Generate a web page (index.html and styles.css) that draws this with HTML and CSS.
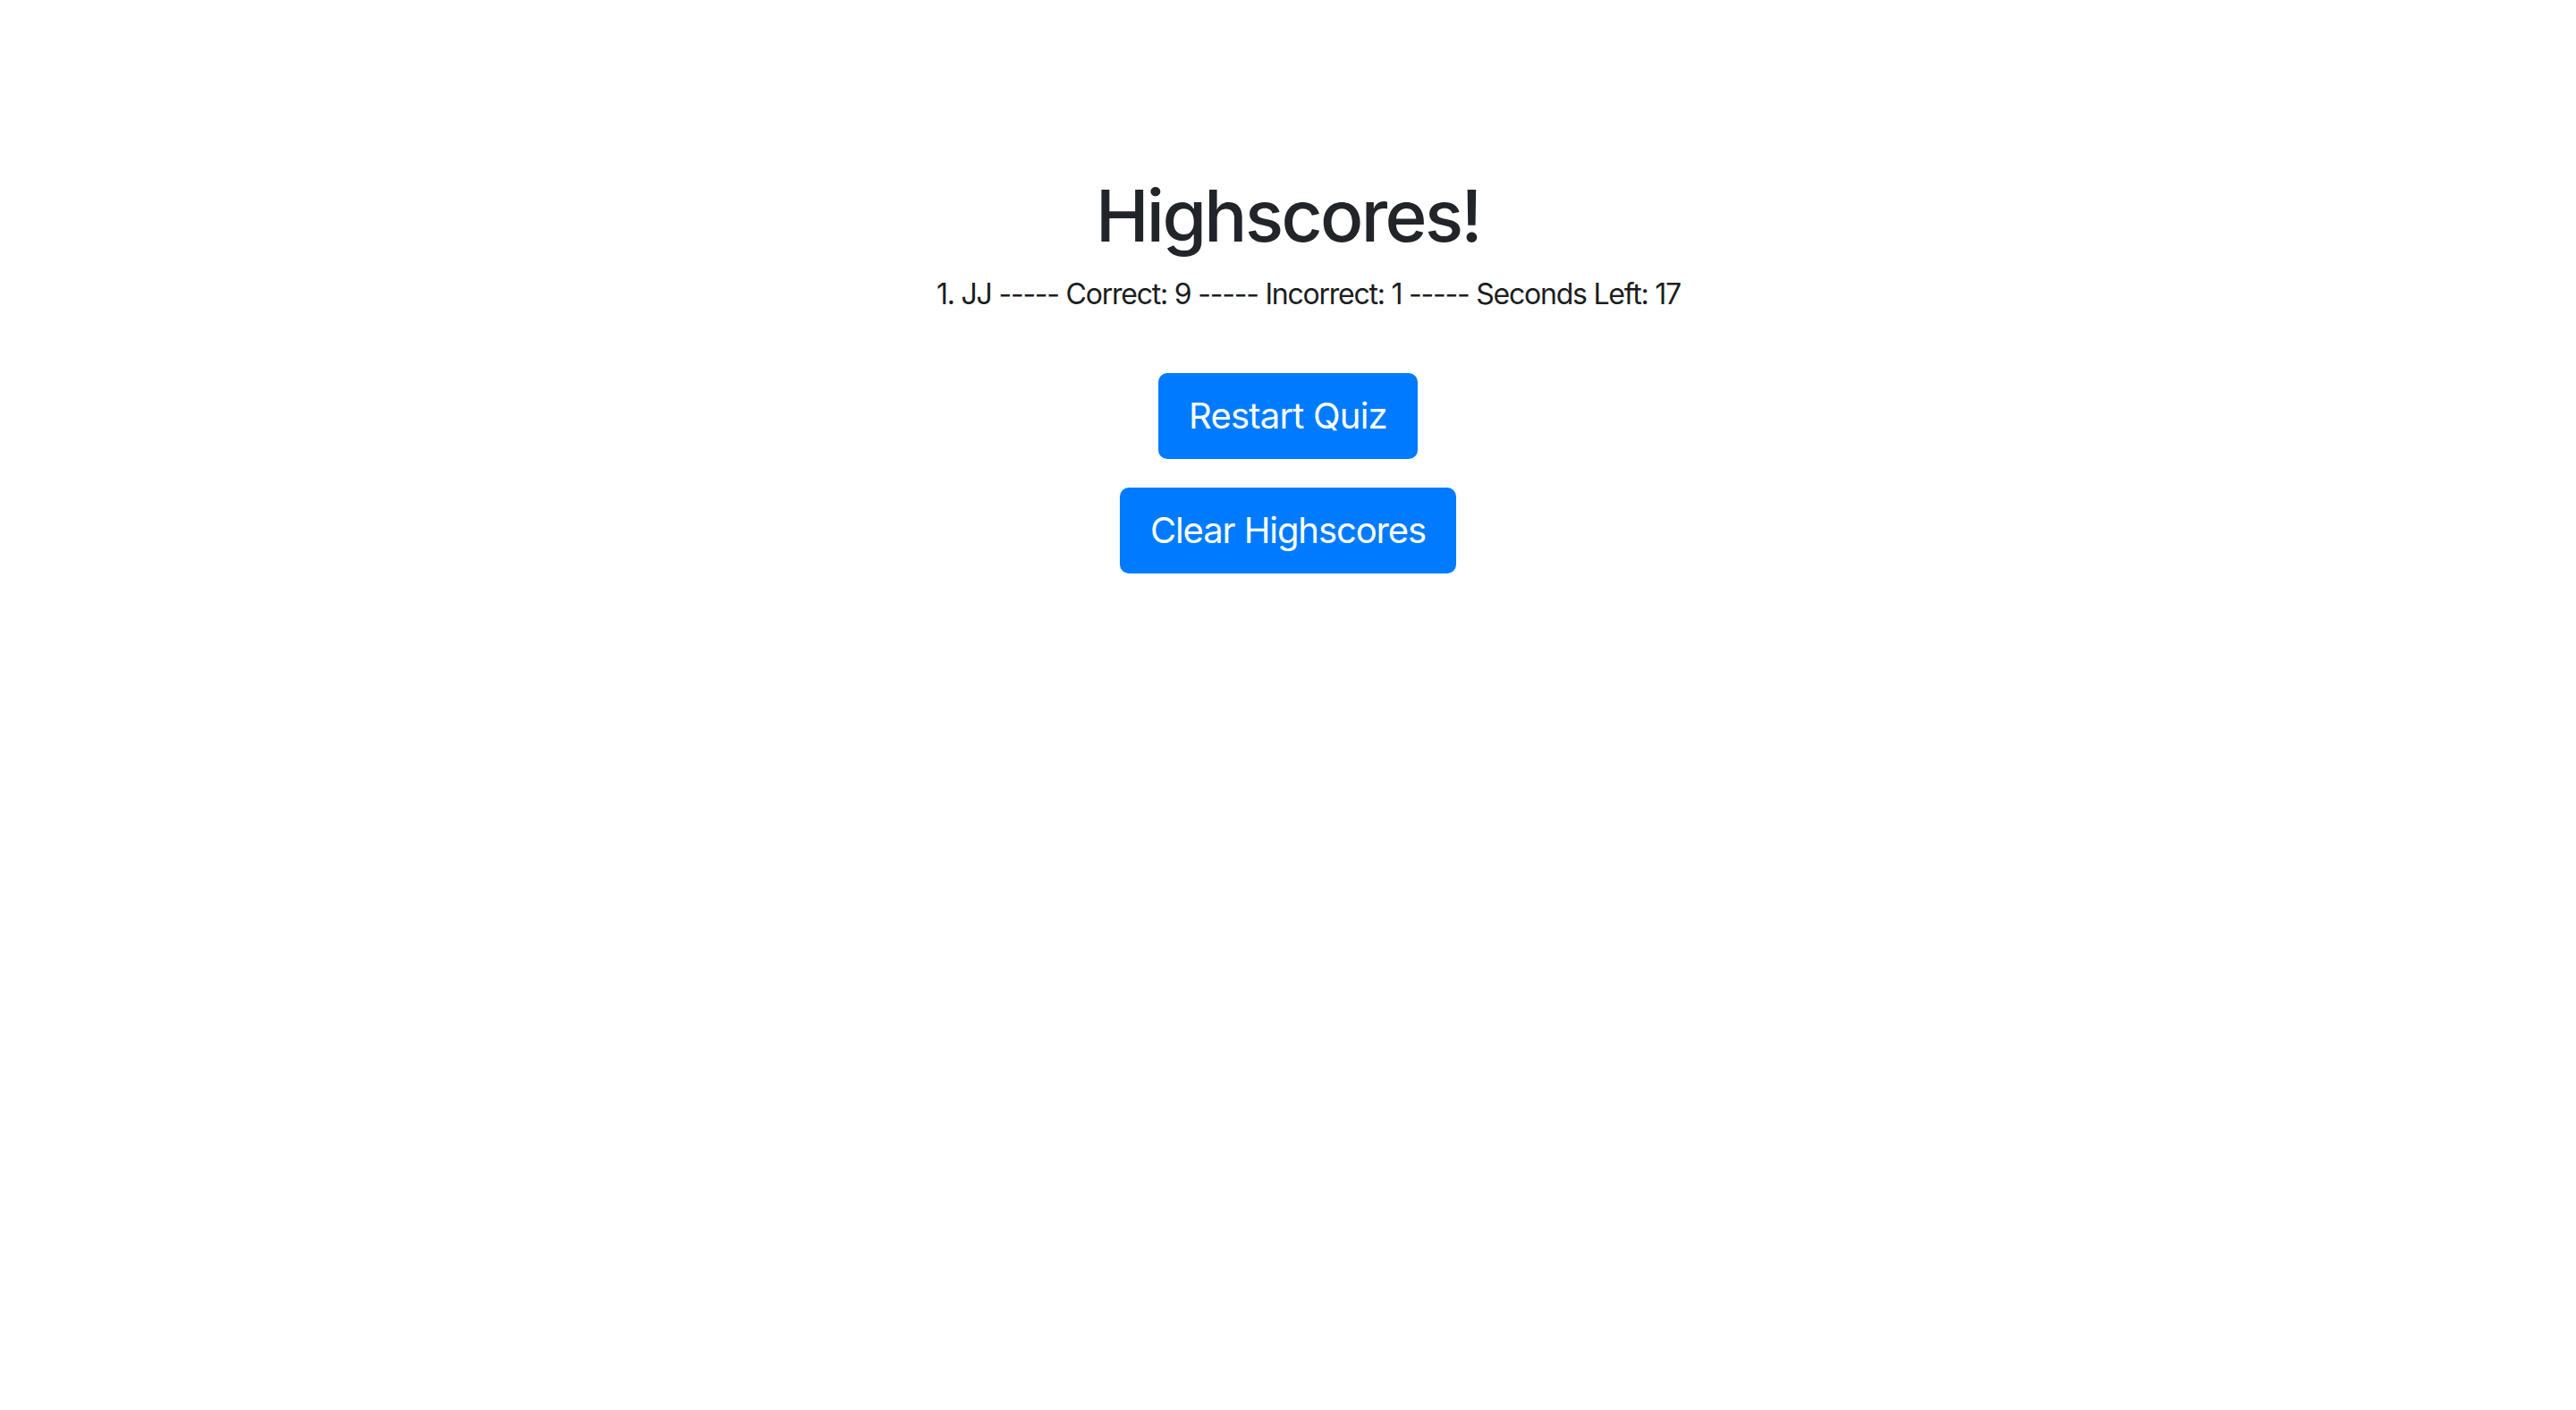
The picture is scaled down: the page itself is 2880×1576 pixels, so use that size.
FILE: index.html
```html
<!DOCTYPE html>
<html lang="en">
<head>
<meta charset="utf-8">
<title>Highscores</title>
<link rel="stylesheet" href="styles.css">
</head>
<body>
<main class="page">
  <h1 class="title">Highscores!</h1>
  <ol class="scores">
    <li class="score">1. JJ ----- Correct: 9 ----- Incorrect: 1 ----- Seconds Left: 17</li>
  </ol>
  <div class="actions">
    <button class="btn btn-restart" type="button">Restart Quiz</button>
    <button class="btn btn-clear" type="button">Clear Highscores</button>
  </div>
</main>
</body>
</html>
```
FILE: styles.css
```css
html, body {
  margin: 0;
  padding: 0;
  background: #ffffff;
}
body {
  font-family: Inter, "Noto Sans", "Liberation Sans", sans-serif;
  color: #212529;
}
.page {
  display: flex;
  flex-direction: column;
  align-items: center;
  padding-top: 193px;
}
.title {
  margin: 0 0 16px;
  font-size: 80px;
  font-weight: 500;
  line-height: 96px;
  letter-spacing: -2.6px;
  color: #212529;
}
.scores {
  list-style: none;
  margin: 0;
  padding: 0 0 0 46px;
}
.score {
  font-size: 32px;
  line-height: 48px;
  letter-spacing: -1.23px;
  color: #1b1e21;
}
.actions {
  display: flex;
  flex-direction: column;
  align-items: center;
  gap: 32px;
  margin-top: 64px;
}
.btn {
  font-family: Inter, "Noto Sans", "Liberation Sans", sans-serif;
  font-size: 40px;
  line-height: 60px;
  padding: 16px 32px;
  border: 2px solid #007bff;
  border-radius: 10px;
  background: #007bff;
  color: #ffffff;
  font-weight: 400;
  letter-spacing: -0.8px;
}
.btn-clear {
  letter-spacing: -1.1px;
}
```
